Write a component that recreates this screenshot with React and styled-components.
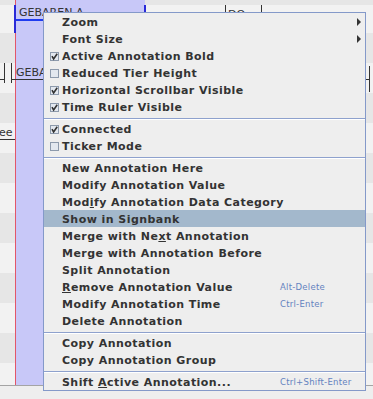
import React from "react";
import styled, { createGlobalStyle } from "styled-components";

const GlobalStyle = createGlobalStyle`
  body {
    margin: 0;
    background: #eeeeee;
    font-family: "DejaVu Sans", "Liberation Sans", sans-serif;
  }
`;

const Viewport = styled.div`
  position: relative;
  width: 373px;
  height: 399px;
  overflow: hidden;
  background: #eeeeee;
`;

const Timeline = styled.div`
  display: flex;
  flex-direction: column;
  height: 385px;
`;

const TierRow = styled.div`
  height: ${(p) => p.$h}px;
  flex: none;
  background: ${(p) => (p.$dark ? "#e6e6e6" : "#f2f2f2")};
`;

const Footer = styled.div`
  height: 13px;
  border-top: 1px solid #a4a4a4;
  background: #eeeeee;
`;

/* overlays on the timeline canvas */
const Selection = styled.div`
  position: absolute;
  left: 16px;
  top: 0;
  width: 129px;
  height: 385px;
  background: #c8c8f8;
`;

const Crosshair = styled.div`
  position: absolute;
  left: 15px;
  top: 0;
  width: 1px;
  height: 385px;
  background: #e2566a;
`;

const Mark = styled.div`
  position: absolute;
  left: ${(p) => p.$x}px;
  top: ${(p) => p.$y}px;
  width: ${(p) => p.$w}px;
  height: ${(p) => p.$h}px;
  background: ${(p) => p.$c || "#333333"};
`;

const AnnoText = styled.div`
  position: absolute;
  left: ${(p) => p.$x}px;
  top: ${(p) => p.$y}px;
  font-size: 11px;
  line-height: 13px;
  color: #333333;
  white-space: nowrap;
`;

const Menu = styled.div`
  position: absolute;
  left: 43px;
  top: 12px;
  width: 321px;
  height: 377px;
  border: 1px solid #8499c9;
  background: #eeeeee;
  display: flex;
  flex-direction: column;
`;

const Item = styled.div`
  display: grid;
  grid-template-columns: 6px 12px 218px 1fr;
  align-items: center;
  height: 17px;
  flex: none;
  background: ${(p) => (p.$active ? "#a3b8cc" : "transparent")};
  color: #333333;
`;

const IconSlot = styled.div`
  grid-column: 2;
  display: flex;
  align-items: center;
  height: 17px;
  padding-top: 1px;
  box-sizing: border-box;
`;

const Label = styled.div`
  grid-column: 3;
  font-size: 11px;
  font-weight: bold;
  letter-spacing: 0.45px;
  line-height: 15px;
  padding-top: 2px;
  white-space: nowrap;
`;

const Shortcut = styled.div`
  grid-column: 4;
  font-size: 8.5px;
  letter-spacing: 0.25px;
  line-height: 15px;
  padding-top: 2px;
  color: #6382bf;
  white-space: nowrap;
`;

const ArrowSlot = styled.div`
  grid-column: 4;
  justify-self: end;
  margin-right: 4px;
  padding-top: 1px;
  display: flex;
  align-items: center;
`;

const U = styled.span`
  text-decoration: underline;
  text-underline-offset: 1px;
`;

const Separator = styled.div`
  height: 5px;
  flex: none;
  box-sizing: border-box;
  padding-top: 3px;

  &::before {
    content: "";
    display: block;
    height: 1px;
    background: #8ea1cd;
  }
  &::after {
    content: "";
    display: block;
    height: 1px;
    background: #ffffff;
  }
`;

function CheckIcon({ checked }) {
  return (
    <svg width="9" height="9" viewBox="0 0 9 9">
      <rect x="0.5" y="0.5" width="8" height="8" fill="#e3e8ef" stroke="#8d9aac" />
      {checked && (
        <path d="M2 4.2 L3.6 7 L7.2 1.8" fill="none" stroke="#333333" strokeWidth="1.6" />
      )}
    </svg>
  );
}

function SubArrow() {
  return (
    <svg width="4" height="8" viewBox="0 0 4 8">
      <polygon points="0,0 4,4 0,8" fill="#333333" />
    </svg>
  );
}

const rows = [
  [5, true],
  [28, false],
  [30, true],
  [30, false],
  [30, true],
  [30, false],
  [30, true],
  [30, false],
  [30, true],
  [30, false],
  [30, true],
  [30, false],
  [30, true],
  [22, false]
];

const menu = [
  { label: "Zoom", arrow: true },
  { label: "Font Size", arrow: true },
  { label: "Active Annotation Bold", check: true },
  { label: "Reduced Tier Height", check: false },
  { label: "Horizontal Scrollbar Visible", check: true },
  { label: "Time Ruler Visible", check: true },
  "sep",
  { label: "Connected", check: true },
  { label: "Ticker Mode", check: false },
  "sep",
  { label: "New Annotation Here" },
  { label: "Modify Annotation Value" },
  { label: ["Mod", "i", "fy Annotation Data Category"] },
  { label: "Show in Signbank", active: true },
  { label: ["Merge with Ne", "x", "t Annotation"] },
  { label: "Merge with Annotation Before" },
  { label: "Split Annotation" },
  { label: ["", "R", "emove Annotation Value"], shortcut: "Alt-Delete" },
  { label: "Modify Annotation Time", shortcut: "Ctrl-Enter" },
  { label: "Delete Annotation" },
  "sep",
  { label: "Copy Annotation" },
  { label: "Copy Annotation Group" },
  "sep",
  { label: ["Shift ", "A", "ctive Annotation..."], shortcut: "Ctrl+Shift-Enter" }
];

function renderLabel(label) {
  if (typeof label === "string") return label;
  return (
    <>
      {label[0]}
      <U>{label[1]}</U>
      {label[2]}
    </>
  );
}

export default function App() {
  return (
    <Viewport>
      <GlobalStyle />
      <Timeline>
        {rows.map(([h, dark], i) => (
          <TierRow key={i} $h={h} $dark={dark} />
        ))}
      </Timeline>
      <Footer />

      <Selection />
      <Crosshair />

      {/* tier 1: GEBAREN-A */}
      <AnnoText $x={19} $y={6}>GEBAREN-A</AnnoText>
      <Mark $x={14} $y={5} $w={2} $h={28} $c="#2a2ad8" />
      <Mark $x={16} $y={19} $w={129} $h={2} $c="#1f3cf0" />
      <Mark $x={144} $y={5} $w={2} $h={8} $c="#2a2ad8" />
      <Mark $x={225} $y={5} $w={1} $h={8} />
      <Mark $x={261} $y={5} $w={1} $h={8} />
      <AnnoText $x={228} $y={8}>DO</AnnoText>

      {/* tier 2 */}
      <Mark $x={0} $y={79} $w={4} $h={1} />
      <Mark $x={4} $y={63} $w={1} $h={20} />
      <Mark $x={11} $y={63} $w={1} $h={20} />
      <Mark $x={12} $y={79} $w={33} $h={1} />
      <AnnoText $x={16} $y={66}>GEBAREN</AnnoText>
      <Mark $x={366} $y={79} $w={3} $h={1} />
      <Mark $x={369} $y={66} $w={1} $h={26} />

      {/* tier 3 */}
      <AnnoText $x={-1} $y={126}>ee</AnnoText>
      <Mark $x={0} $y={139} $w={15} $h={1} />

      <Menu>
        {menu.map((m, i) =>
          m === "sep" ? (
            <Separator key={i} />
          ) : (
            <Item key={i} $active={m.active}>
              <IconSlot>
                {m.check !== undefined && <CheckIcon checked={m.check} />}
              </IconSlot>
              <Label>{renderLabel(m.label)}</Label>
              {m.shortcut && <Shortcut>{m.shortcut}</Shortcut>}
              {m.arrow && (
                <ArrowSlot>
                  <SubArrow />
                </ArrowSlot>
              )}
            </Item>
          )
        )}
      </Menu>
    </Viewport>
  );
}
